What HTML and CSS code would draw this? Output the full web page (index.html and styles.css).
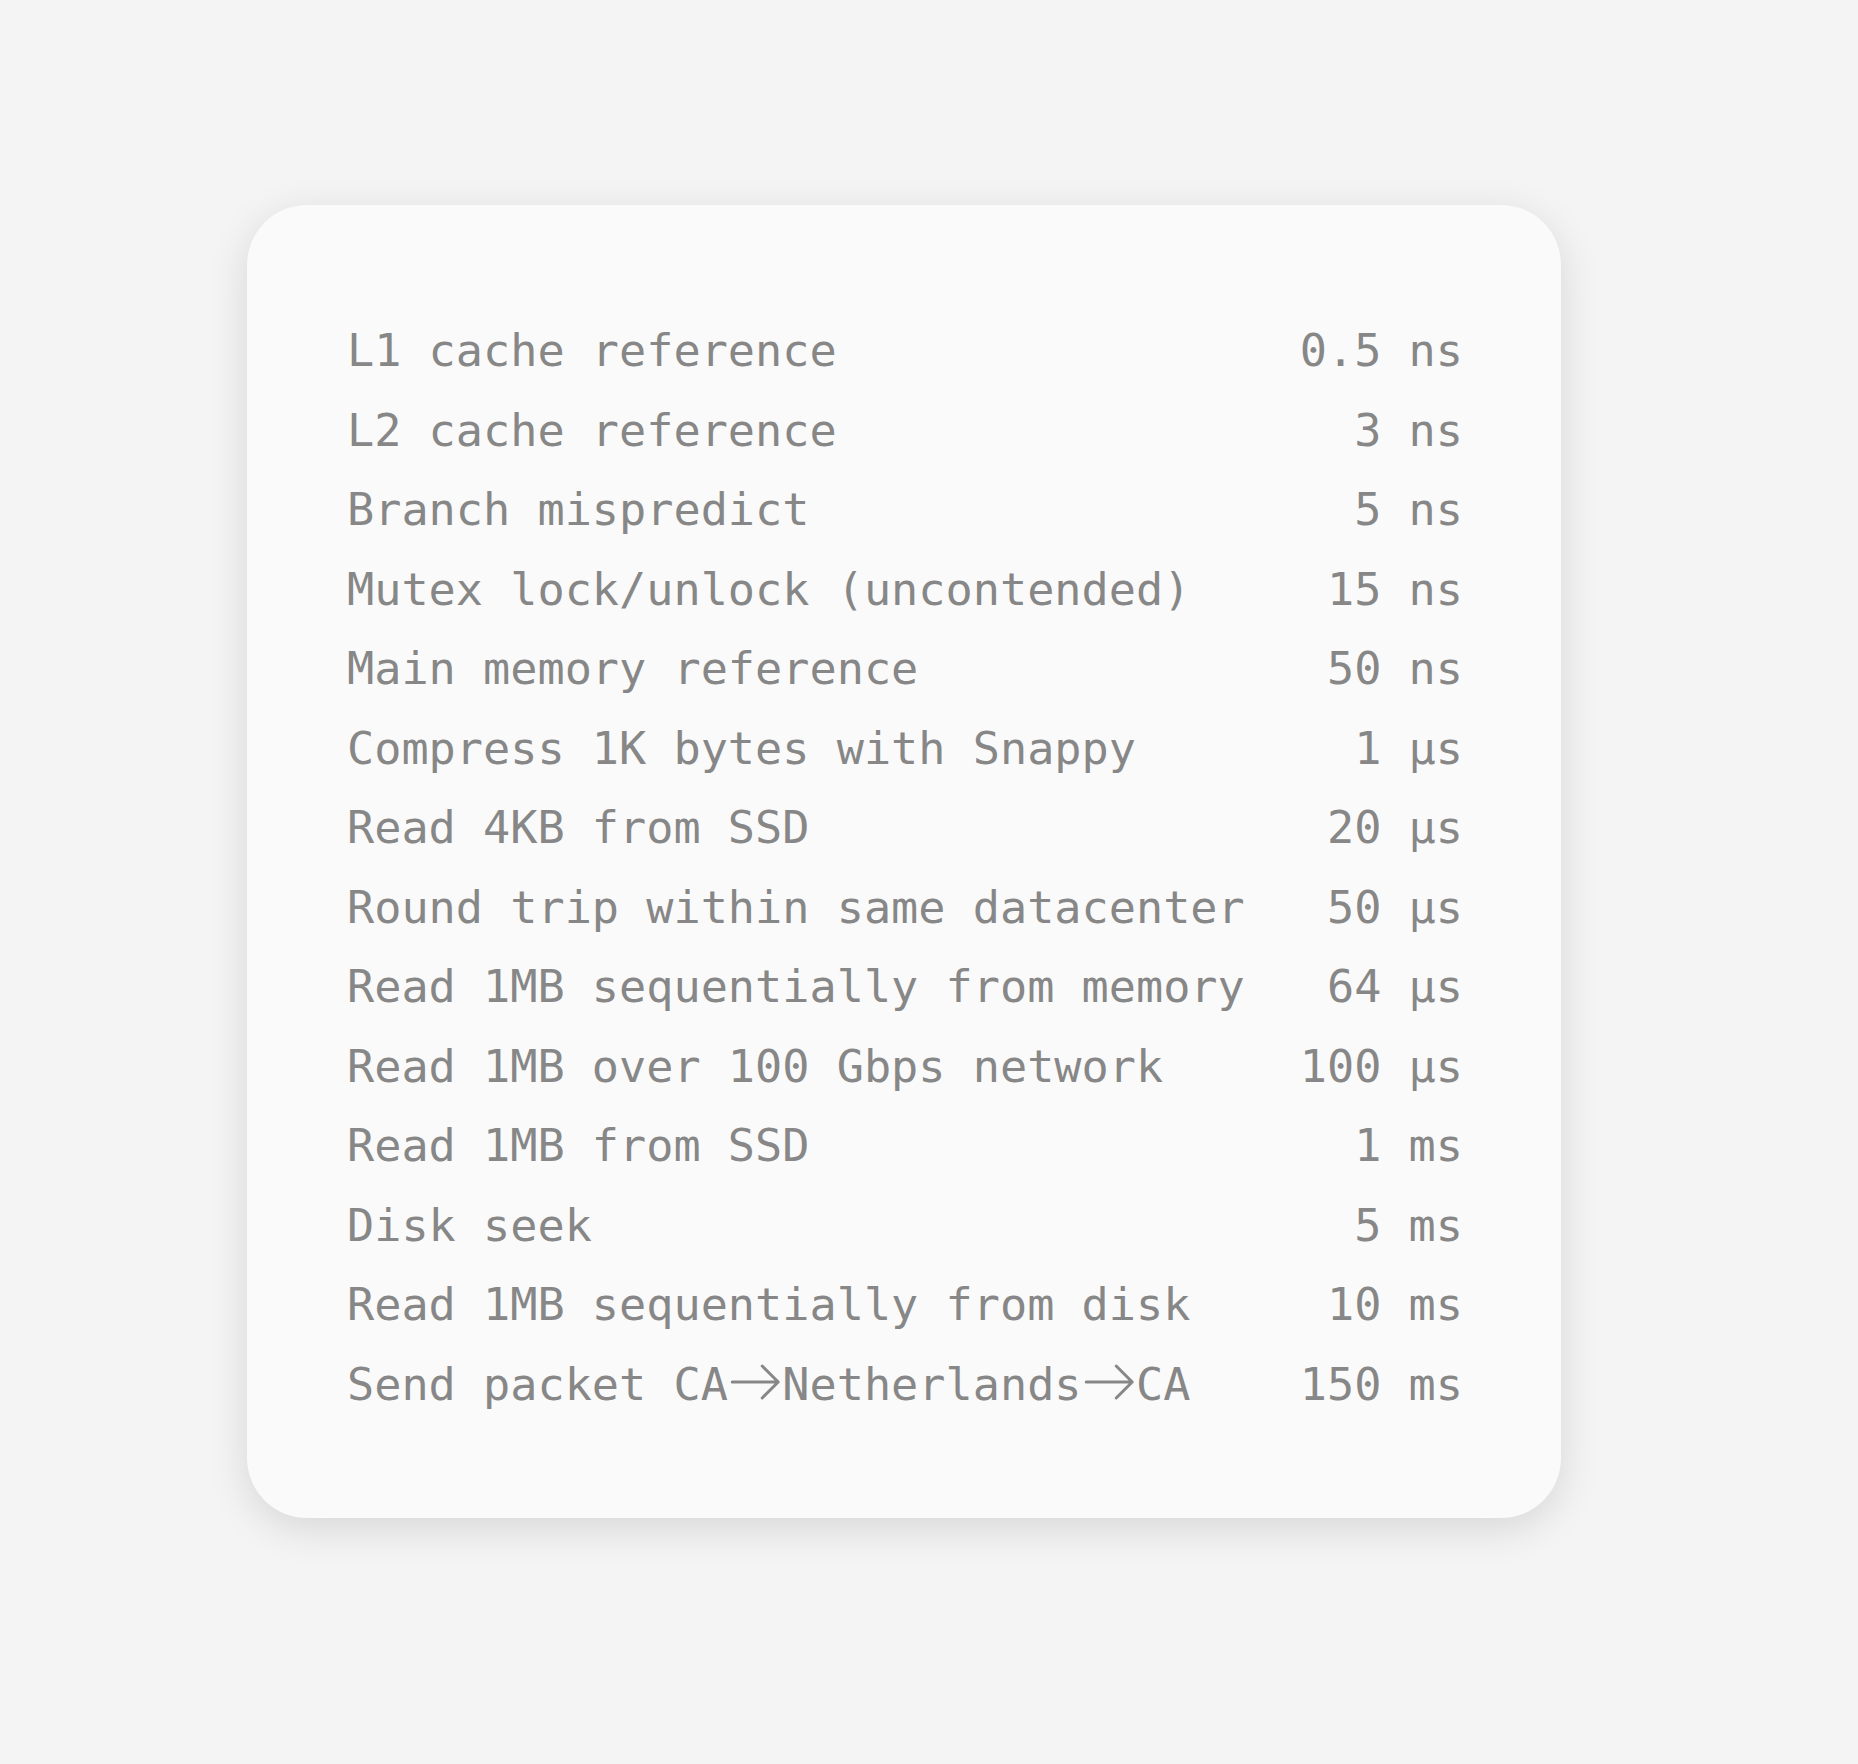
FILE: index.html
```html
<html><head>
<meta charset="UTF-8">
<meta name="viewport" content="width=device-width, initial-scale=1.0">
<title>Latency Numbers</title>
<link rel="stylesheet" href="styles.css">
</head>
<body>
  <main class="page">
    <div class="card">
      <ul class="latency-list">
        <li class="latency-row"><span class="label">L1 cache reference</span><span class="value">0.5 ns</span></li>
        <li class="latency-row"><span class="label">L2 cache reference</span><span class="value">3 ns</span></li>
        <li class="latency-row"><span class="label">Branch mispredict</span><span class="value">5 ns</span></li>
        <li class="latency-row"><span class="label">Mutex lock/unlock (uncontended)</span><span class="value">15 ns</span></li>
        <li class="latency-row"><span class="label">Main memory reference</span><span class="value">50 ns</span></li>
        <li class="latency-row"><span class="label">Compress 1K bytes with Snappy</span><span class="value">1 µs</span></li>
        <li class="latency-row"><span class="label">Read 4KB from SSD</span><span class="value">20 µs</span></li>
        <li class="latency-row"><span class="label">Round trip within same datacenter</span><span class="value">50 µs</span></li>
        <li class="latency-row"><span class="label">Read 1MB sequentially from memory</span><span class="value">64 µs</span></li>
        <li class="latency-row"><span class="label">Read 1MB over 100 Gbps network</span><span class="value">100 µs</span></li>
        <li class="latency-row"><span class="label">Read 1MB from SSD</span><span class="value">1 ms</span></li>
        <li class="latency-row"><span class="label">Disk seek</span><span class="value">5 ms</span></li>
        <li class="latency-row"><span class="label">Read 1MB sequentially from disk</span><span class="value">10 ms</span></li>
        <li class="latency-row"><span class="label">Send packet CA<svg class="arrow" viewBox="0 0 54 40" aria-label="to"><path d="M4 20H50M34 4L50 20L34 36"/></svg>Netherlands<svg class="arrow" viewBox="0 0 54 40" aria-label="to"><path d="M4 20H50M34 4L50 20L34 36"/></svg>CA</span><span class="value">150 ms</span></li>
      </ul>
    </div>
  </main>
</body></html>
```

FILE: styles.css
```css
body {
  margin: 0;
  padding: 0;
  background-color: #f4f4f4;
  font-family: 'DejaVu Sans Mono', 'Liberation Mono', monospace;
  color: #878787;
}
.page {
  padding: 205px 0 0 247px;
}
.card {
  width: 1314px;
  box-sizing: border-box;
  padding: 106px 98px 94px 100px;
  background-color: #fafafa;
  border-radius: 60px;
  box-shadow: 0 10px 40px rgba(0,0,0,0.12);
}
.latency-list {
  list-style-type: none;
  margin: 0;
  padding: 0;
}
.latency-row {
  display: flex;
  justify-content: space-between;
  font-size: 45.2px;
  line-height: 79.5px;
  white-space: pre;
}
.arrow {
  width: 2ch;
  height: 40px;
  vertical-align: -2px;
  fill: none;
  stroke: currentColor;
  stroke-width: 3;
  stroke-linecap: round;
  stroke-linejoin: round;
}
```
